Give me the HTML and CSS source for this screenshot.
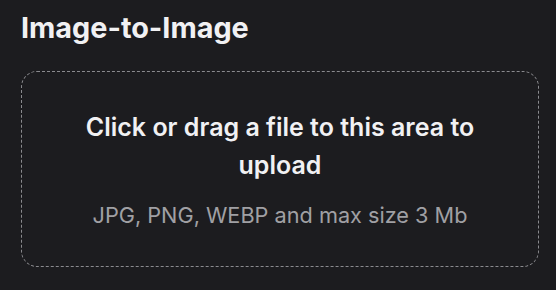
FILE: index.html
```html
<!DOCTYPE html>
<html>
<head>
<meta charset="utf-8">
<link rel="stylesheet" href="styles.css">
</head>
<body>
<div class="page">
  <h1 class="title">Image-to-Image</h1>
  <div class="dropzone">
    <p class="drop-main">Click or drag a file to this area to upload</p>
    <p class="drop-hint">JPG, PNG, WEBP and max size 3 Mb</p>
  </div>
</div>
</body>
</html>
```
FILE: styles.css
```css
html, body {
  margin: 0;
  padding: 0;
  background: #1c1c1f;
  font-family: Inter, "Noto Sans", sans-serif;
}
.page {
  padding: 10px 17px 0 21px;
}
.title {
  margin: 0;
  font-size: 28.8px;
  font-weight: 700;
  line-height: 36px;
  color: #f1f1f3;
}
.dropzone {
  margin-top: 25px;
  height: 196px;
  box-sizing: border-box;
  border: 1px dashed #8a8a8e;
  border-radius: 16px;
  display: flex;
  flex-direction: column;
  align-items: center;
  justify-content: center;
  padding: 0 32px;
  text-align: center;
}
.drop-main {
  margin: 0;
  font-size: 25px;
  font-weight: 600;
  line-height: 38px;
  color: #f1f1f3;
}
.drop-hint {
  margin: 15px 0 0;
  font-size: 21.7px;
  line-height: 32px;
  color: #a0a0a4;
}
```
